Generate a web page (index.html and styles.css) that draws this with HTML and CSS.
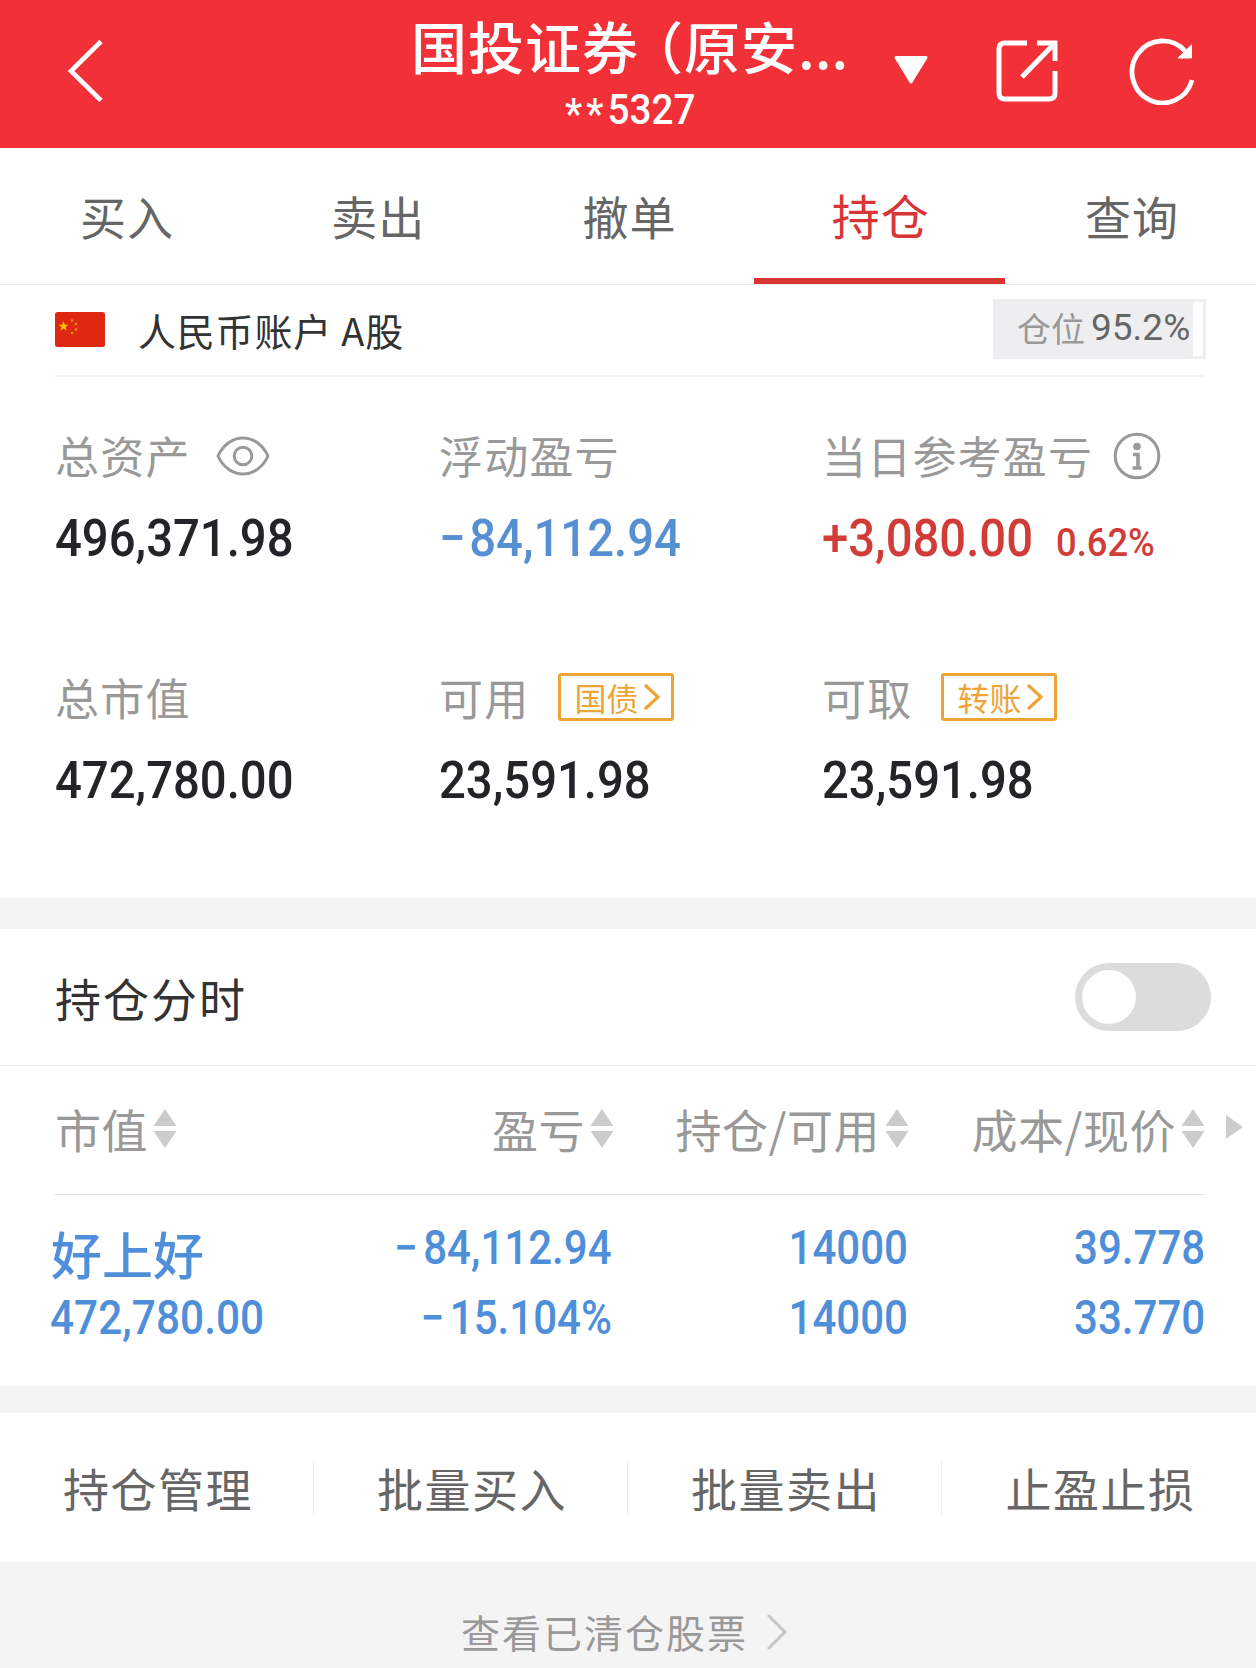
FILE: index.html
```html
<!DOCTYPE html>
<html lang="zh-CN">
<head>
<meta charset="utf-8">
<title>持仓</title>
<link rel="stylesheet" href="styles.css">
</head>
<body>
<header class="topbar">
  <svg class="back" width="36" height="64" viewBox="0 0 36 64"><path d="M34 2.500 L4 32 L34 61.500" fill="none" stroke="#fff" stroke-width="4.600"/></svg>
  <div class="heading">
    <div class="title">国投证券<span class="paren">（</span>原安<span class="dots">...</span></div>
    <div class="acct"><span class="stars">**</span>5327</div>
  </div>
  <svg class="caret" width="36" height="30" viewBox="0 0 36 30"><path d="M3 2.500 H33 L18 27 Z" fill="#fff" stroke="#fff" stroke-width="3" stroke-linejoin="round"/></svg>
  <svg class="share" width="64" height="64" viewBox="0 0 64 64" fill="none" stroke="#fff" stroke-width="5"><path d="M32 4 H10 Q4 4 4 10 V54 Q4 60 10 60 H54 Q60 60 60 54 V32"/><path d="M42 4 H60 V22 M59 5 L27 38"/></svg>
  <svg class="reload" width="68" height="68" viewBox="0 0 68 68"><path d="M63 43 A30.500 31 0 1 1 56 14" fill="none" stroke="#fff" stroke-width="4.800"/><path d="M62.500 8 V21 H49 Z" fill="#fff" stroke="#fff"/></svg>
</header>
<nav class="tabs">
  <a class="tab">买入</a><a class="tab">卖出</a><a class="tab">撤单</a><a class="tab active">持仓</a><a class="tab">查询</a>
</nav>
<section class="account">
  <svg class="flag" width="50" height="35" viewBox="0 0 50 35"><rect width="50" height="35" rx="2.500" fill="#de2810"/><path d="M8.500 9 L9.800 12.700 L13.500 12.800 L10.500 15 L11.600 18.800 L8.500 16.600 L5.400 18.800 L6.500 15 L3.500 12.800 L7.200 12.700 Z" fill="#ffc400"/><g fill="#f08a1c"><circle cx="17" cy="8.500" r="1.300"/><circle cx="21" cy="12" r="1.300"/><circle cx="21" cy="17.500" r="1.300"/><circle cx="17" cy="21" r="1.300"/></g></svg>
  <span class="account-name">人民币账户 A股</span>
  <div class="ratio"><div class="ratio-fill"><span class="ratio-label">仓位</span><span class="ratio-num">95.2%</span></div></div>
</section>
<section class="assets">
  <div class="cell">
    <div class="label">总资产<svg class="eye" width="54" height="40" viewBox="0 0 54 40" fill="none" stroke="#999" stroke-width="3"><path d="M2 20 C13 -4 41 -4 52 20 C41 44 13 44 2 20 Z"/><circle cx="27" cy="20" r="8.800"/></svg></div>
    <div class="value"><span class="num">496,371.98</span></div>
  </div>
  <div class="cell">
    <div class="label low">浮动盈亏</div>
    <div class="value blue"><span class="num"><span class="sign">−</span>84,112.94</span></div>
  </div>
  <div class="cell">
    <div class="label low">当日参考盈亏<svg class="info" width="48" height="48" viewBox="0 0 48 48"><circle cx="24" cy="24" r="21.800" fill="none" stroke="#999" stroke-width="3"/><circle cx="24" cy="14.500" r="3.800" fill="#999"/><path d="M20 22.500 H25 V36 M19.500 36 H28.500" fill="none" stroke="#999" stroke-width="3.600"/></svg></div>
    <div class="value red"><span class="num">+3,080.00</span><span class="pct">0.62%</span></div>
  </div>
  <div class="cell">
    <div class="label">总市值</div>
    <div class="value"><span class="num">472,780.00</span></div>
  </div>
  <div class="cell">
    <div class="label">可用<span class="tag">国债<svg width="18" height="28" viewBox="0 0 18 28"><path d="M2 2 L15 14 L2 26" fill="none" stroke="#eda436" stroke-width="3.200"/></svg></span></div>
    <div class="value"><span class="num">23,591.98</span></div>
  </div>
  <div class="cell">
    <div class="label">可取<span class="tag">转账<svg width="18" height="28" viewBox="0 0 18 28"><path d="M2 2 L15 14 L2 26" fill="none" stroke="#eda436" stroke-width="3.200"/></svg></span></div>
    <div class="value"><span class="num">23,591.98</span></div>
  </div>
</section>
<section class="minute">
  <span>持仓分时</span>
  <div class="switch"><div class="knob"></div></div>
</section>
<section class="table">
  <div class="row head">
    <div class="c1">市值<svg class="sort" width="24" height="40" viewBox="0 0 24 40"><path d="M12 0 L23.500 17 H.5Z M.5 22 H23.500 L12 39Z"/></svg></div>
    <div class="c2">盈亏<svg class="sort" width="24" height="40" viewBox="0 0 24 40"><path d="M12 0 L23.500 17 H.5Z M.5 22 H23.500 L12 39Z"/></svg></div>
    <div class="c3">持仓/可用<svg class="sort" width="24" height="40" viewBox="0 0 24 40"><path d="M12 0 L23.500 17 H.5Z M.5 22 H23.500 L12 39Z"/></svg></div>
    <div class="c4">成本/现价<svg class="sort" width="24" height="40" viewBox="0 0 24 40"><path d="M12 0 L23.500 17 H.5Z M.5 22 H23.500 L12 39Z"/></svg></div>
    <svg class="more" width="17" height="24" viewBox="0 0 17 24"><path d="M0 0 L17 12 L0 24Z" fill="#ccc"/></svg>
  </div>
  <div class="rule"></div>
  <div class="row data">
    <div class="c1"><div class="name">好上好</div><div class="num">472,780.00</div></div>
    <div class="c2"><div class="num"><span class="sign">−</span>84,112.94</div><div class="num"><span class="sign">−</span>15.104%</div></div>
    <div class="c3"><div class="num">14000</div><div class="num">14000</div></div>
    <div class="c4"><div class="num">39.778</div><div class="num">33.770</div></div>
  </div>
</section>
<section class="actions">
  <a>持仓管理</a><a>批量买入</a><a>批量卖出</a><a>止盈止损</a>
</section>
<footer class="cleared"><span>查看已清仓股票</span><svg width="24" height="38" viewBox="0 0 24 38"><path d="M3 2 L20 19 L3 36" fill="none" stroke="#c4c4c4" stroke-width="2.800"/></svg></footer>
</body>
</html>
```
FILE: styles.css
```css
* { box-sizing: border-box; }
body {
  margin: 0;
  width: 1256px;
  height: 1668px;
  overflow: hidden;
  display: flex;
  flex-direction: column;
  background: #fff;
  color: #333;
  font-family: "Noto Sans CJK SC", sans-serif;
}
svg { display: block; flex: none; }

/* header */
.topbar {
  height: 148px;
  flex: none;
  background: #f23038;
  color: #fff;
  display: flex;
  align-items: flex-start;
}
.back { margin: 39px 0 0 67px; }
.heading { margin-left: 308px; width: 441px; }
.title {
  font-size: 56px;
  font-weight: 500;
  letter-spacing: 1px;
  line-height: 64px;
  margin-top: 13px;
  white-space: nowrap;
}
.paren { font-feature-settings: "halt"; margin-left: 16px; }
.dots { letter-spacing: 0; }
.acct {
  font: 500 42px/44px Roboto, sans-serif;
  margin: 11px 0 0 154px;
  transform: scaleX(.92);
  transform-origin: left;
}
.stars { letter-spacing: 4.500px; vertical-align: -4px; line-height: 1px; }
.caret { margin: 55px 0 0 41px; }
.share { margin: 39px 0 0 66px; }
.reload { margin: 37px 0 0 70px; }

/* tabs */
.tabs {
  height: 137px;
  flex: none;
  display: grid;
  grid-template-columns: repeat(5, 1fr);
  border-bottom: 1px solid #e9e9e9;
}
.tab {
  height: 136px;
  text-align: center;
  font-size: 46px;
  letter-spacing: 1px;
  line-height: 135px;
  padding-left: 3px;
  color: #666;
}
.tab.active {
  color: #d83636;
  font-size: 48px;
  line-height: 133px;
  border-bottom: 6px solid #d83636;
}

/* account */
.account {
  margin: 0 51px 0 55px;
  height: 92px;
  flex: none;
  display: flex;
  align-items: flex-start;
  border-bottom: 2px solid #f4f4f4;
}
.flag { margin-top: 27px; }
.account-name {
  font-size: 38px;
  letter-spacing: .8px;
  line-height: 50px;
  margin: 20px 0 0 33px;
  white-space: nowrap;
}
.ratio {
  margin: 14px -1px 0 auto;
  width: 213px;
  height: 60px;
  border: 3px solid #eeeef0;
}
.ratio-fill {
  width: 197px;
  height: 54px;
  background: #eeeef0;
  display: flex;
  align-items: center;
  padding-left: 21px;
  white-space: nowrap;
}
.ratio-label { font-size: 34px; line-height: 50px; color: #999; margin-top: -3px; }
.ratio-num { font: 400 37px/50px Roboto, sans-serif; color: #666; margin: -2px 0 0 6px; }

/* assets */
.assets {
  height: 521px;
  flex: none;
  padding: 48px 0 0 55px;
  display: grid;
  grid-template-columns: 384px 383px 1fr;
  grid-auto-rows: 144px;
  row-gap: 98px;
}
.label {
  height: 60px;
  margin-bottom: 23px;
  display: flex;
  align-items: center;
  font-size: 44px;
  letter-spacing: 1.200px;
  line-height: 60px;
  color: #999;
  white-space: nowrap;
}
.low { line-height: 64px; }
.eye { margin: 2px 0 0 25px; }
.info { margin: 1px 0 0 20px; }
.value {
  height: 60px;
  display: flex;
  align-items: baseline;
  line-height: 60px;
  color: #222428;
}
.num {
  font-family: Roboto, sans-serif;
  font-weight: 500;
  transform: scaleX(.9);
  transform-origin: left;
  white-space: nowrap;
}
.value .num { font-size: 52.500px; }
.value .sign { letter-spacing: 4px; }
.pct {
  font: 500 39.500px/60px Roboto, sans-serif;
  transform: scaleX(.92);
  transform-origin: left;
  margin-left: -1px;
}
.blue { color: #5790d2; }
.red { color: #d23c38; }
.tag {
  width: 116px;
  height: 48px;
  margin: 0 0 0 29px;
  border: 3px solid #eda436;
  border-radius: 3px;
  color: #eda436;
  font-size: 32px;
  letter-spacing: 0;
  line-height: 36px;
  display: flex;
  align-items: center;
  padding-left: 13px;
}
.tag svg { margin-left: 5px; }

/* intraday switch */
.minute {
  height: 168px;
  flex: none;
  border-top: 31px solid #f4f4f4;
  border-bottom: 1px solid #e8e8e8;
  padding: 0 45px 0 55px;
  display: flex;
  align-items: center;
  justify-content: space-between;
  font-size: 46px;
  letter-spacing: 2px;
}
.switch {
  width: 136px;
  height: 68px;
  border-radius: 34px;
  background: #dcdcdc;
  padding: 7px;
}
.knob { width: 54px; height: 54px; border-radius: 50%; background: #fff; }

/* holdings table */
.table { height: 320px; flex: none; }
.row {
  display: grid;
  padding-left: 55px;
  grid-template-columns: 200px 359px 295px 296px 1fr;
}
.row > div { display: flex; }
.head {
  height: 128px;
  padding-bottom: 4px;
  align-items: center;
  color: #999;
  font-size: 46px;
  letter-spacing: .5px;
}
.row .c2, .row .c3, .row .c4 { justify-content: flex-end; }
.head > div { align-items: center; white-space: nowrap; line-height: 60px; }
.sort { margin: 1px 0 0 5px; fill: #ccc; }
.more { margin: -2px 0 0 21px; }
.rule { height: 1px; margin: 0 52px 0 55px; background: #e0e0e0; }
.data { color: #4f8fd9; font-size: 47.500px; line-height: 70px; padding-top: 18px; }
.data > div { flex-direction: column; }
.data .c2, .data .c3, .data .c4 { align-items: flex-end; }
.data .c1 { margin-left: -5px; }
.data .c1 .num { transform: scaleX(.893); }
.data .c2 .num, .data .c3 .num, .data .c4 .num { transform: scaleX(.885); transform-origin: right; }
.data .c2 { padding-right: 2px; }
.data .c3 { padding-right: 1px; }
.data .sign { letter-spacing: 6px; }
.name {
  height: 70px;
  padding-left: 1px;
  font-size: 51px;
  font-weight: 500;
  line-height: 80px;
  white-space: nowrap;
}

/* actions */
.actions {
  height: 176px;
  flex: none;
  border-top: 27px solid #f4f4f4;
  display: grid;
  grid-template-columns: repeat(4, 1fr);
  align-items: center;
}
.actions a {
  height: 56px;
  line-height: 55px;
  font-size: 46px;
  letter-spacing: 1.500px;
  padding-left: 3px;
  text-align: center;
  color: #666;
  border-right: 1px solid #eee;
}
.actions a:last-child { border-right: 0; }

.cleared {
  flex: 1;
  background: #f4f4f4;
  color: #999;
  font-size: 39px;
  letter-spacing: 2px;
  line-height: 60px;
  display: flex;
  align-items: flex-start;
  padding: 39px 0 0 461px;
}
.cleared svg { margin: 12px 0 0 17px; }
```
